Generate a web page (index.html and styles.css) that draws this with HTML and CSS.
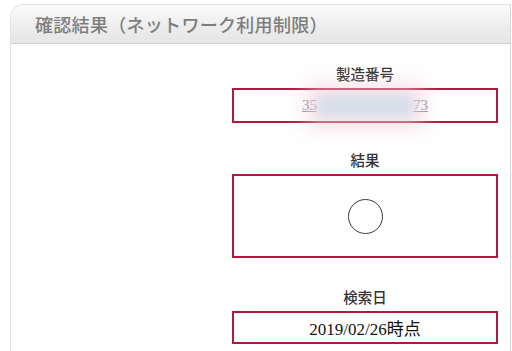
FILE: index.html
```html
<!DOCTYPE html>
<html lang="ja">
<head>
  <meta charset="UTF-8">
  <title>確認結果</title>
  <link rel="stylesheet" href="styles.css">
</head>
<body>
  <div class="panel">
    <div class="panel-head">
      <h2>確認結果（ネットワーク利用制限）</h2>
    </div>
    <div class="panel-body">
      <div class="result-col">
        <div class="label">製造番号</div>
        <div class="box box-serial">
          <a href="#" class="serial">35<span class="masked"></span>73</a>
        </div>

        <div class="label">結果</div>
        <div class="box box-result">
          <div class="mark"></div>
        </div>

        <div class="label">検索日</div>
        <div class="box box-date">2019/02/26時点</div>
      </div>
    </div>
  </div>
</body>
</html>
```

FILE: styles.css
```css
body {
  margin: 0;
  background: #fff;
  font-family: "Liberation Serif", "Noto Sans CJK JP", serif;
  overflow: hidden;
}

.panel {
  margin: 4px 1px 0 10px;
  border: 1px solid #e2e2e2;
  border-right-color: #d6d6d6;
  border-bottom: none;
  border-radius: 14px 0 0 0;
  height: calc(100vh - 4px);
  box-sizing: border-box;
}

.panel-head {
  height: 38px;
  border-radius: 13px 0 0 0;
  background: linear-gradient(#fbfbfb, #ececec 60%, #e6e6e6);
  border-bottom: 1px solid #d0d0d0;
  display: flex;
  align-items: center;
  padding-left: 24px;
}

h2 {
  margin: 0;
  font-family: "Noto Sans CJK JP", sans-serif;
  font-size: 18px;
  font-weight: 500;
  color: #7e7e7e;
  letter-spacing: 0.3px;
}

.panel-body {
  display: flex;
  justify-content: flex-end;
  padding: 21px 12px 0 0;
}

.result-col {
  width: 266px;
  text-align: center;
}

.label {
  font-family: "Noto Sans CJK JP", serif;
  font-size: 14.5px;
  font-weight: 500;
  color: #333;
  line-height: 18px;
  margin-bottom: 5px;
}

.box {
  border: 2px solid #b4183f;
  box-sizing: border-box;
  display: flex;
  justify-content: center;
  align-items: center;
}

.box-serial {
  height: 35px;
  margin-bottom: 28px;
}

.serial {
  color: #8a93a8;
  font-size: 15px;
  text-decoration: underline;
  display: flex;
  align-items: center;
}

.masked {
  display: inline-block;
  width: 96px;
  height: 22px;
  background: #d6dfea;
  filter: blur(5px);
  box-shadow: 0 0 16px 12px rgba(246, 200, 212, 0.5);
}

.box-result {
  height: 84px;
  margin-bottom: 30px;
}

.mark {
  width: 35px;
  height: 35px;
  border: 1.5px solid #3a3a3a;
  border-radius: 50%;
  box-sizing: border-box;
}

.box-date {
  height: 33px;
  font-size: 17px;
  color: #111;
}
```
